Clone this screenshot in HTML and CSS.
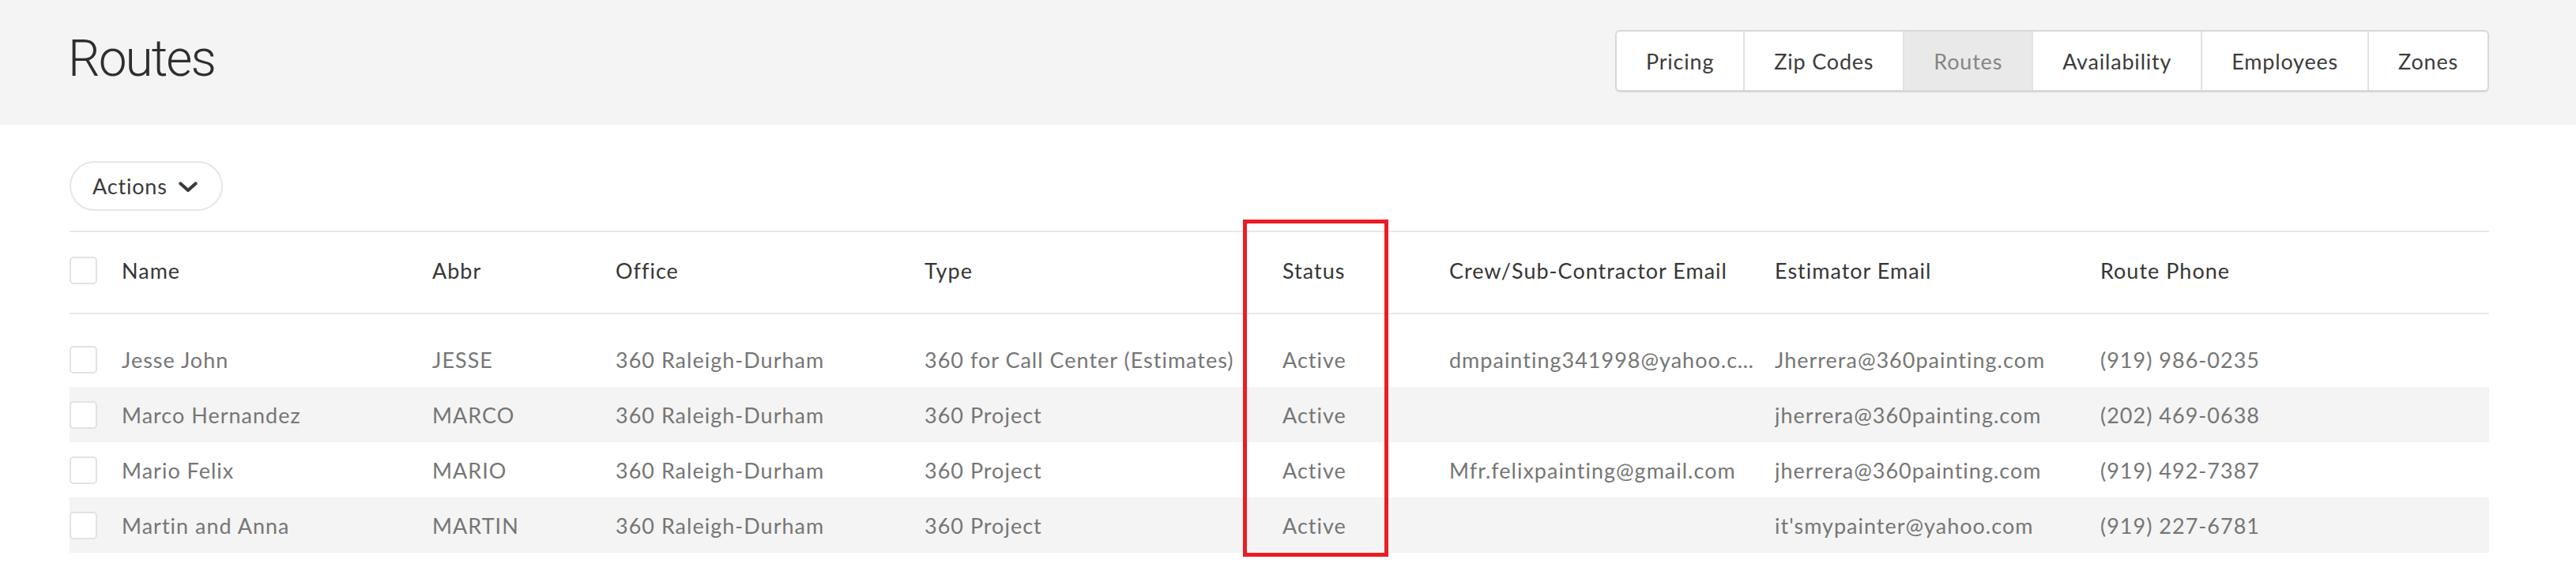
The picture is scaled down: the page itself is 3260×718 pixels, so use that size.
FILE: index.html
```html
<!DOCTYPE html>
<html>
<head>
<meta charset="utf-8">
<title>Routes</title>
<link rel="stylesheet" href="styles.css">
</head>
<body>
<header class="topbar">
  <h1 class="title">Routes</h1>
  <nav class="tabs">
    <a class="tab">Pricing</a>
    <a class="tab">Zip Codes</a>
    <a class="tab active">Routes</a>
    <a class="tab">Availability</a>
    <a class="tab">Employees</a>
    <a class="tab">Zones</a>
  </nav>
</header>
<main class="content">
  <div class="toolbar">
    <button class="actions">Actions
      <svg class="chev" width="24" height="14" viewBox="0 0 24 14"><polyline points="2.5,2.5 12,11 21.5,2.5" fill="none" stroke="#3b3b3b" stroke-width="4.2" stroke-linecap="round" stroke-linejoin="round"/></svg>
    </button>
  </div>
  <div class="table">
    <div class="row head">
      <div class="cell"><span class="check"></span></div>
      <div class="cell">Name</div>
      <div class="cell">Abbr</div>
      <div class="cell">Office</div>
      <div class="cell">Type</div>
      <div class="cell">Status</div>
      <div class="cell">Crew/Sub-Contractor Email</div>
      <div class="cell">Estimator Email</div>
      <div class="cell">Route Phone</div>
    </div>
    <div class="body">
      <div class="row">
        <div class="cell"><span class="check"></span></div>
        <div class="cell">Jesse John</div>
        <div class="cell">JESSE</div>
        <div class="cell">360 Raleigh-Durham</div>
        <div class="cell">360 for Call Center (Estimates)</div>
        <div class="cell">Active</div>
        <div class="cell">dmpainting341998@yahoo.com</div>
        <div class="cell">Jherrera@360painting.com</div>
        <div class="cell">(919) 986-0235</div>
      </div>
      <div class="row">
        <div class="cell"><span class="check"></span></div>
        <div class="cell">Marco Hernandez</div>
        <div class="cell">MARCO</div>
        <div class="cell">360 Raleigh-Durham</div>
        <div class="cell">360 Project</div>
        <div class="cell">Active</div>
        <div class="cell"></div>
        <div class="cell">jherrera@360painting.com</div>
        <div class="cell">(202) 469-0638</div>
      </div>
      <div class="row">
        <div class="cell"><span class="check"></span></div>
        <div class="cell">Mario Felix</div>
        <div class="cell">MARIO</div>
        <div class="cell">360 Raleigh-Durham</div>
        <div class="cell">360 Project</div>
        <div class="cell">Active</div>
        <div class="cell">Mfr.felixpainting@gmail.com</div>
        <div class="cell">jherrera@360painting.com</div>
        <div class="cell">(919) 492-7387</div>
      </div>
      <div class="row">
        <div class="cell"><span class="check"></span></div>
        <div class="cell">Martin and Anna</div>
        <div class="cell">MARTIN</div>
        <div class="cell">360 Raleigh-Durham</div>
        <div class="cell">360 Project</div>
        <div class="cell">Active</div>
        <div class="cell"></div>
        <div class="cell">it'smypainter@yahoo.com</div>
        <div class="cell">(919) 227-6781</div>
      </div>
    </div>
    <div class="highlight"></div>
  </div>
</main>
</body>
</html>
```
FILE: styles.css
```css
* { box-sizing: border-box; }
html, body { margin: 0; padding: 0; background: #fff; }
body {
  font-family: "Lato", "Liberation Sans", sans-serif;
  color: #333;
  width: 3260px;
  height: 718px;
  overflow: hidden;
}
.topbar {
  height: 158px;
  background: #f4f4f4;
  display: flex;
  align-items: center;
  justify-content: space-between;
  padding: 0 110px 0 86px;
}
.title {
  margin: 0 0 8px 0;
  font-family: "Roboto", "Liberation Sans", sans-serif;
  font-weight: 300;
  font-size: 64px;
  letter-spacing: -2px;
  color: #2e2e2e;
  line-height: 1;
}
.tabs {
  display: flex;
  height: 79px;
  margin-bottom: 3px;
  background: #fff;
  border: 2px solid #d8d8d8;
  border-bottom-width: 3px;
  border-radius: 6px;
  overflow: hidden;
}
.tab {
  display: flex;
  align-items: center;
  justify-content: center;
  padding: 0 37px;
  font-size: 27px;
  letter-spacing: 0.8px;
  color: #3c3c3c;
  border-left: 2px solid #e2e2e2;
}
.tab:first-child { border-left: none; }
.tab.active { background: #e9e9e9; color: #858585; }

.content { padding: 46px 110px 0 88px; }
.toolbar { height: 88px; }
.actions {
  height: 63px;
  width: 194px;
  border: 2px solid #e6e6e6;
  border-radius: 32px;
  background: #fff;
  font-family: "Lato", "Liberation Sans", sans-serif;
  font-size: 27px;
  letter-spacing: 0.8px;
  color: #3b3b3b;
  display: flex;
  align-items: center;
  padding: 0 0 0 27px;
  gap: 14px;
}
.chev { margin-top: 2px; }

.table { position: relative; }
.row {
  display: grid;
  grid-template-columns: 66px 393px 232px 391px 453px 211px 412px 412px 1fr;
  height: 70px;
  align-items: center;
}
.row.head {
  height: 106px;
  padding-bottom: 5px;
  border-top: 2px solid #e8e8e8;
  border-bottom: 2px solid #e8e8e8;
  color: #363636;
}
.body { padding-top: 22px; }
.body .row { color: #767676; }
.body .row:nth-child(even) { background: #f4f4f4; }
.cell {
  font-size: 27px;
  letter-spacing: 1px;
  white-space: nowrap;
  overflow: hidden;
  text-overflow: ellipsis;
  padding-right: 25px;
}
.check {
  display: block;
  width: 35px;
  height: 35px;
  border: 2px solid #e2e2e2;
  border-radius: 5px;
  background: #fff;
}
.highlight {
  position: absolute;
  left: 1485px;
  top: -14px;
  width: 184px;
  height: 427px;
  border: 5px solid #ed1c24;
}
```
